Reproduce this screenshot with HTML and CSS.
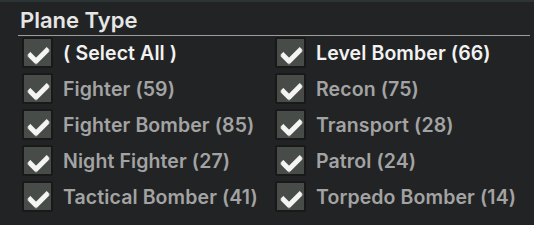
FILE: index.html
```html
<!DOCTYPE html>
<html lang="en">
<head>
  <meta charset="UTF-8">
  <title>Plane Type Filter</title>
  <link rel="stylesheet" href="styles.css">
</head>
<body>
  <div class="panel">
    <h2 class="panel-title">Plane Type</h2>
    <ul class="options">
      <li class="option active"><span class="box"></span>( Select All )</li>
      <li class="option active"><span class="box"></span>Level Bomber (66)</li>
      <li class="option"><span class="box"></span>Fighter (59)</li>
      <li class="option"><span class="box"></span>Recon (75)</li>
      <li class="option"><span class="box"></span>Fighter Bomber (85)</li>
      <li class="option"><span class="box"></span>Transport (28)</li>
      <li class="option"><span class="box"></span>Night Fighter (27)</li>
      <li class="option"><span class="box"></span>Patrol (24)</li>
      <li class="option"><span class="box"></span>Tactical Bomber (41)</li>
      <li class="option"><span class="box"></span>Torpedo Bomber (14)</li>
    </ul>
  </div>
</body>
</html>
```

FILE: styles.css
```css
* { margin: 0; padding: 0; box-sizing: border-box; }
html, body { background-color: #222324; }
body {
  font-family: 'Inter', 'Noto Sans', sans-serif;
  color: #a3a3a3;
  width: 534px;
  height: 225px;
  overflow: hidden;
}

/* Panel */
.panel {
  height: 225px;
  border-top: 2px solid #2c3536;
  padding: 0 4px 0 18px;
}
.panel-title {
  font-size: 22px;
  font-weight: 600;
  color: #e6e6e6;
  line-height: 26px;
  padding: 5px 0 2px 2px;
  border-bottom: 1px solid #9c9c9c;
}

/* Options grid */
.options {
  list-style: none;
  display: grid;
  grid-template-columns: 253px 1fr;
  row-gap: 5px;
  padding: 1px 0 0 4px;
}
.option {
  display: flex;
  align-items: center;
  gap: 10px;
  height: 31px;
  font-size: 19.5px;
  font-weight: 600;
  letter-spacing: 0.1px;
  white-space: nowrap;
}
.option.active { color: #f2f2f2; }

/* Checkbox */
.box {
  position: relative;
  width: 31px;
  height: 31px;
  flex: none;
  background-color: #474c49;
  border: 2px solid #19191a;
  border-radius: 2px;
}
.box::after {
  content: "";
  position: absolute;
  left: 8px;
  top: 4px;
  width: 8px;
  height: 15px;
  border-right: 5px solid #f4f4f4;
  border-bottom: 5px solid #f4f4f4;
  border-radius: 2px;
  transform: rotate(45deg);
  filter: blur(0.6px);
}
```
